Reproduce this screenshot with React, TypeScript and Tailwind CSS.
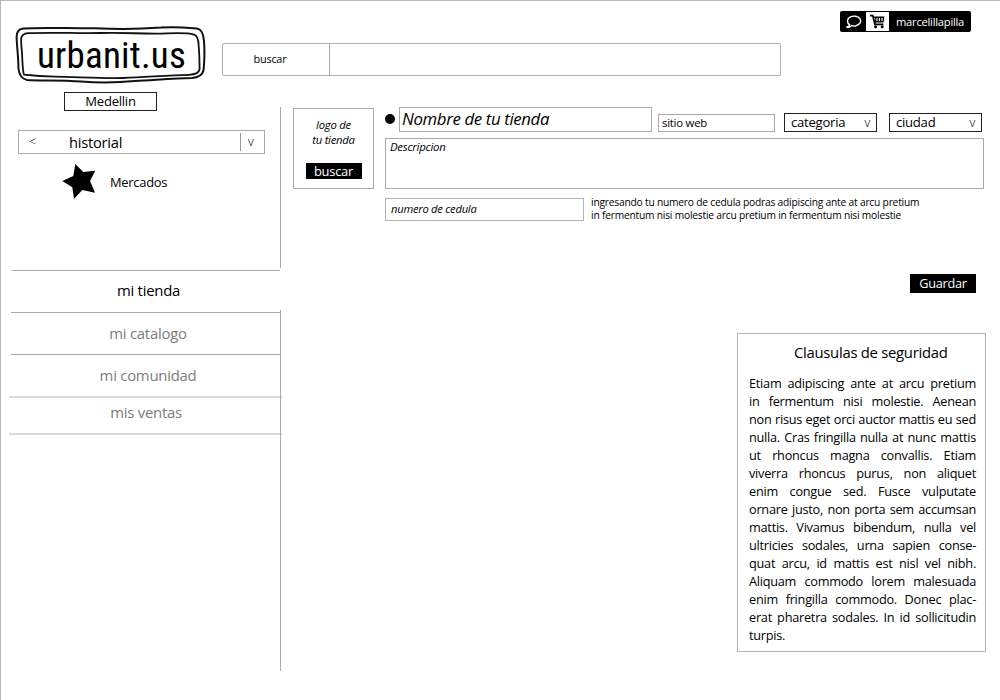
import type { ReactNode } from "react";

const clauseLines = [
  "Etiam adipiscing ante at arcu pretium",
  "in fermentum nisi molestie. Aenean",
  "non risus eget orci auctor mattis eu sed",
  "nulla. Cras fringilla nulla at nunc mattis",
  "ut rhoncus magna convallis. Etiam",
  "viverra rhoncus purus, non aliquet",
  "enim congue sed. Fusce vulputate",
  "ornare justo, non porta sem accumsan",
  "mattis. Vivamus bibendum, nulla vel",
  "ultricies sodales, urna sapien conse-",
  "quat arcu, id mattis est nisl vel nibh.",
  "Aliquam commodo lorem malesuada",
  "enim fringilla commodo. Donec plac-",
  "erat pharetra sodales. In id sollicitudin",
];

function Logo() {
  return (
    <div className="ml-[14px] mt-[24px] grid h-[60px] w-[194px]">
      <svg
        viewBox="0 0 194 60"
        className="[grid-area:1/1] h-[60px] w-[194px]"
        fill="none"
        stroke="#111"
        strokeLinejoin="round"
        strokeLinecap="round"
      >
        <path strokeWidth="2" d="M8 3.5 C30 2.2 55 3.6 80 3.2 C105 4.6 130 3.8 146 2.6 C158 1.4 170 2.4 182 3.4 C187 4 188.500 9 189 16 C190 27 189.200 38 188.600 45 C187.500 50 184 52.500 177 53 C160 53 140 55 120 56 C105 57.500 85 58 66 56.600 C45 55 25 56 12 55 C7 54 4 49 3.400 43 C3.600 34 2 24 1.600 12 C1.500 7 4 4.200 8 3.500 Z" />
        <path strokeWidth="1.8" d="M13 8.200 C40 7 62 8.600 85 8 C110 7 130 9.600 152 8.400 C164 8 174 8 179 9.600 C182.500 10.800 183.500 14 183.600 20 C184.600 30 184.400 38 184.600 44 C184 48 180 49.600 174 49.800 C150 50.200 130 52.600 108 53 C85 53.500 60 51.800 40 51.600 C28 51.400 18 50.600 9 49.600 C7.500 46 7.600 38 7 28 C6.400 22 6 17 6.200 13 C7 9.800 9.500 8.600 13 8.200 Z" />
      </svg>
      <span className="[grid-area:1/1] z-10 pl-[22px] pt-[10px] font-['Roboto_Condensed','Roboto',sans-serif] text-[37px] leading-[42px] tracking-[0.2px] text-black">
        urbanit.us
      </span>
    </div>
  );
}

function Account() {
  return (
    <div className="ml-[618px] mt-[10px] flex h-[21px] w-[131px] items-center rounded-[2px] bg-black">
      <svg viewBox="0 0 26 21" className="h-[21px] w-[26px]" fill="none" stroke="#fff" strokeWidth="1.4">
        <path d="M9.800 13.800 C6.600 11.800 6.800 8 10 6.200 C13.500 4.400 18.200 5 20 7.600 C21.800 10.400 19.800 13.800 16 14.800 C14.200 15.200 12.800 15 11.600 14.600 C10.200 16.200 8.400 16.800 6.400 16.200 C8.200 16 9.300 15.200 9.800 13.800 Z" />
      </svg>
      <svg viewBox="0 0 23 19" className="h-[19px] w-[23px] bg-white" fill="none" stroke="#000">
        <path strokeWidth="1.800" d="M4 3.600 H6.800 L9 12.400 H17.400" />
        <path strokeWidth="1.400" d="M7 5.200 H17.600 L17 9.800 H8.400" />
        <path strokeWidth="1.300" d="M9.800 5 V10 M12.200 5 V10 M14.700 5 V10" />
        <circle cx="9.600" cy="14.800" r="1.500" fill="#000" stroke="none" />
        <circle cx="16.200" cy="14.800" r="1.500" fill="#000" stroke="none" />
      </svg>
      <span className="ml-[7px] text-[11.200px] text-white">marcelillapilla</span>
    </div>
  );
}

function Select({ className, children }: { className: string; children: ReactNode }) {
  return (
    <div className={"flex items-center justify-between border border-[#222] pl-[6px] pr-[6px] " + className}>
      <span>{children}</span>
      <span className="pt-[1px] text-[12.500px] font-light">v</span>
    </div>
  );
}

function Sidebar() {
  return (
    <aside className="flex h-[608px] w-[279px] shrink-0 flex-col">
      <div className="ml-[63px] flex h-[19px] w-[93px] items-center justify-center border border-[#222] text-[13.100px]">
        Medellin
      </div>
      <div className="ml-[17px] mt-[19px] flex h-[24px] w-[247px] items-center border border-[#aaa]">
        <span className="w-[50px] pl-[10px] pt-px text-[12.500px] font-light">&lt;</span>
        <span className="w-[171px] pt-px text-[14.700px]">historial</span>
        <span className="flex h-[18px] items-center border-l border-[#999] pl-[7px] text-[12.500px] font-light">v</span>
      </div>
      <div className="ml-[61px] mt-[10px] flex h-[36px] items-center">
        <svg viewBox="0 0 35 36" className="h-[36px] w-[35px]" fill="#000">
          <path d="M13.300 0 L21.300 8 L33.300 6.700 L28 17 L33 28.700 L20.300 26 L12 35 L10.300 23.300 L0.300 17 L11.300 12 Z" />
        </svg>
        <span className="ml-[13px] pt-px text-[12.900px]">Mercados</span>
      </div>
      <nav className="mt-[70px] flex flex-col text-center text-[14.900px] text-[#7d7d7d]">
        <hr className="ml-[11px] w-[268px] border-t border-[#a8a8a8]" />
        <a className="h-[41px] pl-[16px] leading-[38px] text-black">mi tienda</a>
        <hr className="ml-[10px] w-[270px] border-t border-[#a8a8a8]" />
        <a className="h-[41px] pl-[15px] leading-[40px]">mi catalogo</a>
        <hr className="ml-[10px] w-[270px] border-t border-[#a8a8a8]" />
        <a className="h-[41px] pl-[15px] leading-[40px]">mi comunidad</a>
        <hr className="ml-[8px] w-[273px] border-t-2 border-[#d8d8d8]" />
        <a className="h-[35px] pl-[11px] leading-[28px]">mis ventas</a>
        <hr className="ml-[8px] w-[273px] border-t-2 border-[#d8d8d8]" />
      </nav>
    </aside>
  );
}

export default function App() {
  return (
    <div className="flex h-[700px] w-[1000px] flex-col overflow-hidden whitespace-nowrap border-l border-t border-[#b8b8b8] bg-white font-['Open_Sans','Noto_Sans',sans-serif] leading-none tracking-[-0.25px] text-black">
      <header className="flex h-[91px] shrink-0">
        <div className="w-[221px] shrink-0">
          <Logo />
        </div>
        <div className="flex flex-col">
          <Account />
          <div className="mt-[11px] flex h-[33px] w-[559px] rounded-[2px] border border-[#b0b0b0]">
            <div className="flex w-[107px] items-center justify-center border-r border-[#aaa] pr-[12px] text-[10.900px]">
              buscar
            </div>
          </div>
        </div>
      </header>

      <div className="flex">
        <Sidebar />
        <div className="flex w-px shrink-0 flex-col">
          <div className="mt-[15px] h-[161px] bg-[#aaa]" />
          <div className="mt-[42px] h-[361px] bg-[#aaa]" />
        </div>

        <main className="ml-[12px] mt-[15px] flex w-[693px] flex-col">
          <div className="flex">
            <section className="mt-px flex h-[81px] w-[81px] shrink-0 flex-col items-center border border-[#aaa] pt-[9px]">
              <p className="text-center text-[11.300px] italic leading-[14.500px]">
                logo de
                <br />
                tu tienda
              </p>
              <button className="mt-[16px] h-[16px] w-[56px] bg-black text-[12.900px] leading-[15px] tracking-[-0.25px] text-white">buscar</button>
            </section>

            <section className="ml-[11px] flex flex-col">
              <div className="flex h-[25px] items-end text-[13.100px]">
                <span className="mb-[8px] h-[10px] w-[10px] rounded-full bg-black" />
                <div className="ml-[4px] flex h-[25px] w-[253px] items-center border border-[#aaa] pl-[2px] text-[16.800px] italic tracking-[-0.36px]">
                  Nombre de tu tienda
                </div>
                <div className="ml-[6px] flex h-[18px] w-[117px] items-center border border-[#aaa] pl-[3px] text-[11.400px]">
                  sitio web
                </div>
                <Select className="ml-[9px] h-[19px] w-[93px]">categoria</Select>
                <Select className="ml-[12px] h-[19px] w-[93px]">ciudad</Select>
              </div>
              <div className="mt-[6px] h-[51px] w-[599px] border border-[#aaa] pl-[4px] pt-[2px] text-[11.400px] italic">
                Descripcion
              </div>
              <div className="mt-[9px] flex">
                <div className="flex h-[23px] w-[199px] items-center border border-[#b4b4b4] pb-[2px] pl-[5px] text-[11.200px] italic">
                  numero de cedula
                </div>
                <p className="-mt-[2px] ml-[7px] text-[10.220px] leading-[13px] tracking-[-0.2px]">
                  ingresando tu numero de cedula podras adipiscing ante at arcu pretium
                  <br />
                  in fermentum nisi molestie arcu pretium in fermentum nisi molestie
                </p>
              </div>
            </section>
          </div>

          <button className="ml-[617px] mt-[52px] h-[19px] w-[66px] bg-black text-[12.700px] leading-[19px] tracking-[-0.25px] text-white">
            Guardar
          </button>

          <article className="ml-[444px] mt-[40px] h-[319px] w-[249px] border border-[#b4b4b4] pl-[12px] pr-[9px] pt-[9px]">
            <h2 className="pl-[44px] text-[14.850px] leading-[18px] tracking-[-0.28px]">Clausulas de seguridad</h2>
            <div className="-ml-px mt-[13px] text-[12.720px] leading-[18px]">
              {clauseLines.map((line) => (
                <p key={line} className="text-justify [text-align-last:justify] whitespace-normal">
                  {line}
                </p>
              ))}
              <p>turpis.</p>
            </div>
          </article>
        </main>
      </div>
    </div>
  );
}
